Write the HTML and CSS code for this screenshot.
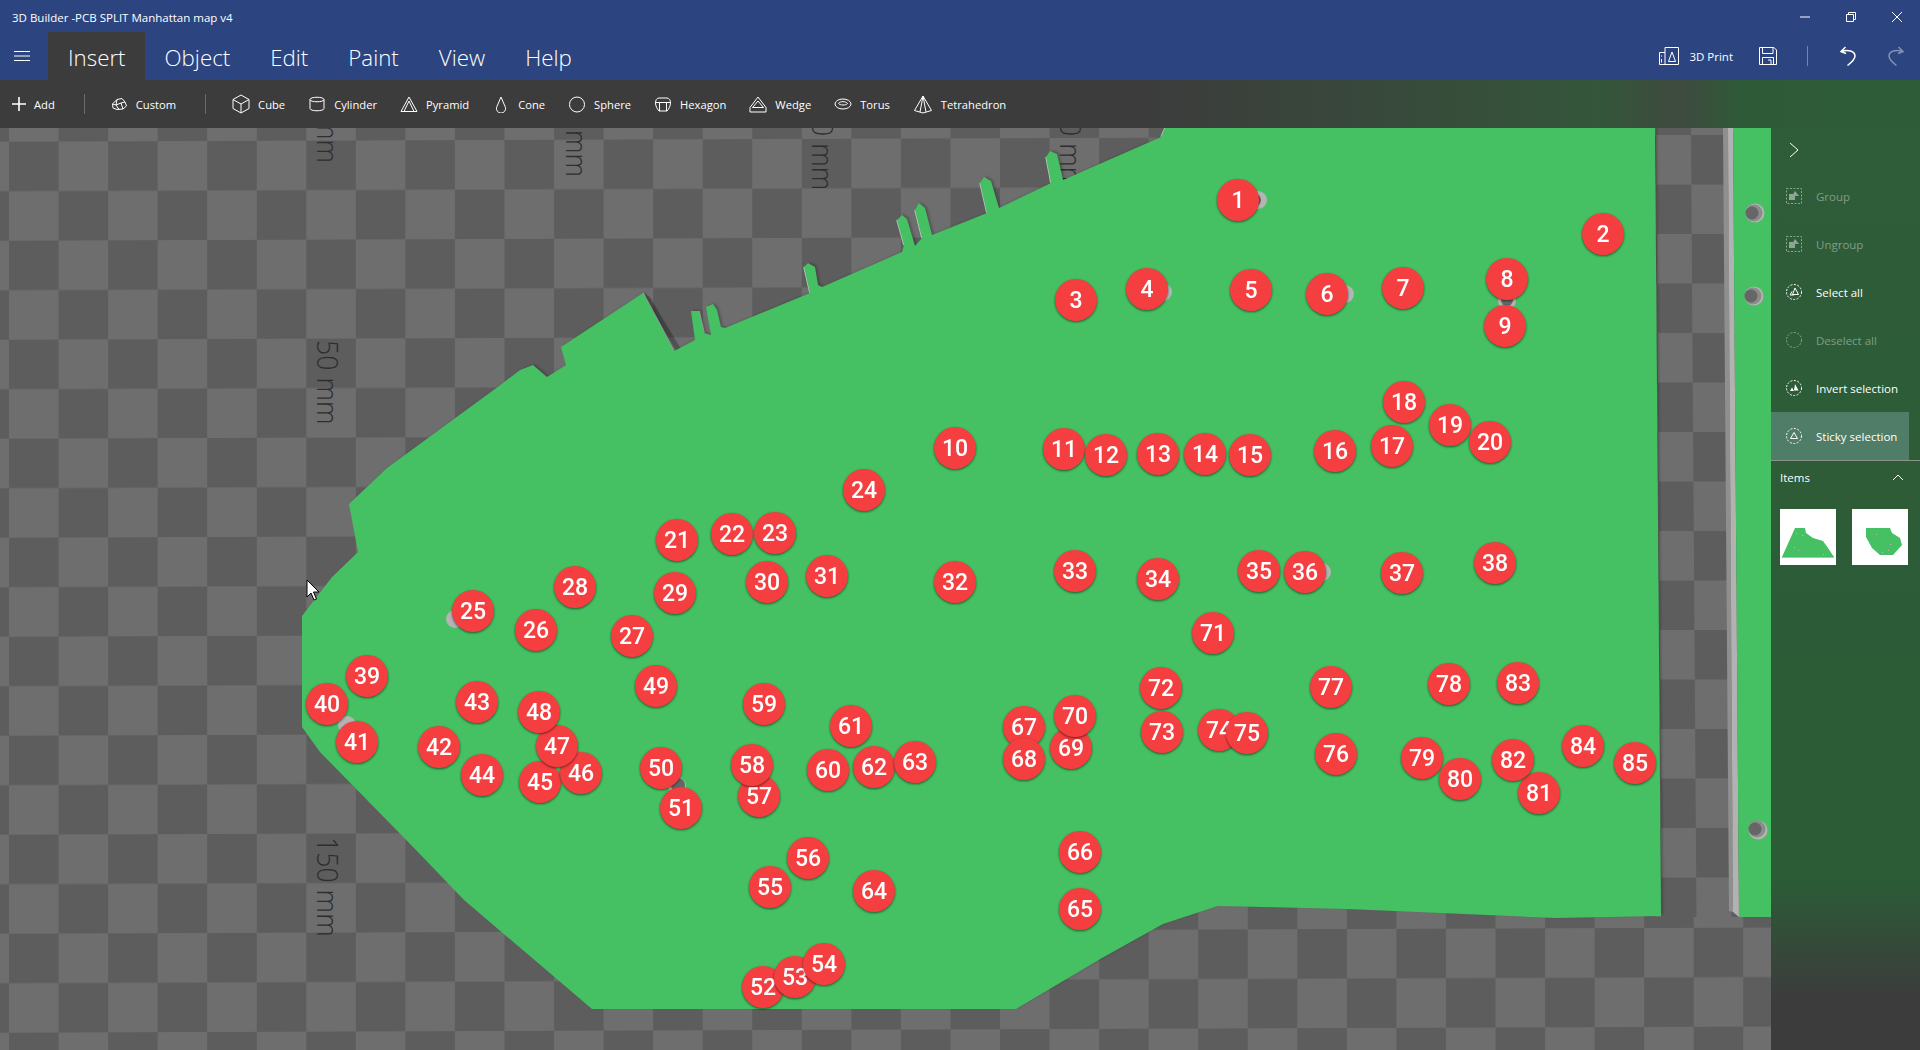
FILE: index.html
```html
<!DOCTYPE html>
<html lang="en">
<head>
    <meta charset="UTF-8">
    <title>3D Builder - PCB SPLIT Manhattan map v4</title>
    <link rel="stylesheet" href="styles.css">
</head>
<body>
<div class="app">
    <header class="titlebar">
        <span class="title">3D Builder -PCB SPLIT Manhattan map v4</span>
        <div class="window-btns">
            <svg width="12" height="12" viewBox="0 0 12 12"><path d="M1 6H11"/></svg>
            <svg width="12" height="12" viewBox="0 0 12 12"><path d="M1.5 3.5H8.5V10.5H1.5Z M3.5 3.5V1.5H10.5V8.5H8.5"/></svg>
            <svg width="12" height="12" viewBox="0 0 12 12"><path d="M1 1L11 11M11 1L1 11"/></svg>
        </div>
    </header>

    <nav class="menubar">
        <button class="hamburger"><svg width="16" height="10" viewBox="0 0 16 10"><path d="M0 .5H16M0 5H16M0 9.5H16"/></svg></button>
        <a class="tab active">Insert</a>
        <a class="tab">Object</a>
        <a class="tab">Edit</a>
        <a class="tab">Paint</a>
        <a class="tab">View</a>
        <a class="tab">Help</a>
        <div class="actions">
            <svg class="print-icon" width="20" height="18" viewBox="0 0 20 18"><path d="M.5 5.5H6M.5 5.5V17.5H19.5V.5H6V17.5M2.5 8.5V9.5M2.5 12V15.5M13 5L16.5 14.5H9.5Z"/></svg>
            <span class="print-label">3D Print</span>
            <svg class="save-icon" width="18" height="18" viewBox="0 0 18 18"><path d="M.5 .5H15L17.5 3V17.5H.5Z M3.5 .5V6.5H14V.5 M3.5 17.5V10.5H14.5V17.5 M9 13H12V17.5"/></svg>
            <span class="action-sep"></span>
            <svg class="undo-icon" width="16" height="20" viewBox="0 0 16 20"><path d="M5.5 1L1 5.5L6 7.5M1 5.5C8 3 15 5 15 10C15 13 12 16 7.5 19.5"/></svg>
            <svg class="redo-icon" width="16" height="20" viewBox="0 0 16 20"><path d="M10.5 1L15 5.5L10 7.5M15 5.5C8 3 1 5 1 10C1 13 4 16 8.5 19.5"/></svg>
        </div>
    </nav>

    <div class="toolbar">
        <div class="tool tool-add"><svg width="14" height="14" viewBox="0 0 14 14"><path d="M7 0V14M0 7H14" stroke-width="1.6"/></svg><span>Add</span></div>
        <span class="tool-sep"></span>
        <div class="tool"><svg width="17" height="14" viewBox="0 0 17 14"><path d="M6 2.5L11 1.5L14 5L15.5 9L12 12L6 12.5L2 11L1.5 7Z M6 2.5L5 8L1.5 7M5 8L8 12.5M5 8L10 6L14 5M10 6L12 12"/></svg><span>Custom</span></div>
        <span class="tool-sep"></span>
        <div class="tool"><svg width="18" height="20" viewBox="0 0 18 20"><path d="M9 1L17 5.5V14.5L9 19L1 14.5V5.5Z M1 5.5L9 10L17 5.5M9 10V19"/></svg><span>Cube</span></div>
        <div class="tool"><svg width="18" height="16" viewBox="0 0 18 16"><path d="M2 3.5C2 .5 16 .5 16 3.5V12.5C16 15.5 2 15.5 2 12.5Z M2 3.5C2 6.5 16 6.5 16 3.5"/></svg><span>Cylinder</span></div>
        <div class="tool"><svg width="18" height="17" viewBox="0 0 18 17"><path d="M9 1L17 15.5H1Z M9 5L4 15.5M9 5L14 15.5"/></svg><span>Pyramid</span></div>
        <div class="tool"><svg width="18" height="17" viewBox="0 0 18 17"><path d="M9 1L13.5 11.5A4.6 4.6 0 1 1 4.5 11.5Z"/></svg><span>Cone</span></div>
        <div class="tool"><svg width="18" height="17" viewBox="0 0 18 17"><circle cx="9" cy="8.5" r="7.5"/></svg><span>Sphere</span></div>
        <div class="tool"><svg width="18" height="15" viewBox="0 0 18 15"><path d="M5 1H13C15.5 1 16.5 3.5 16.5 6S15 12 13 14H5C3 12 1.5 8.5 1.5 6S2.5 1 5 1Z M1.5 5.5H16.5M5.500 5.5V14M12.5 5.5V14"/></svg><span>Hexagon</span></div>
        <div class="tool"><svg width="18" height="17" viewBox="0 0 18 17"><path d="M9 1L17 11.5V16H1V11.5Z M9 5L3.5 11.5H14.5Z"/></svg><span>Wedge</span></div>
        <div class="tool"><svg width="18" height="12" viewBox="0 0 18 12"><ellipse cx="9" cy="6" rx="8" ry="5"/><path d="M4.5 5.5C6 3 12 3 13.5 5.5C12 7.5 6 7.5 4.5 5.5Z"/></svg><span>Torus</span></div>
        <div class="tool"><svg width="20" height="19" viewBox="0 0 20 19"><path d="M10 1L18.5 15.5L10 18L1.5 15.5Z M10 1L7 17M10 1L13 17"/></svg><span>Tetrahedron</span></div>
    </div>

    <div class="main">
        <svg class="viewport" width="1771" height="922" viewBox="0 128 1771 922">
            <defs>
                <pattern id="floor" width="99.1" height="99" patternUnits="userSpaceOnUse" patternTransform="translate(9 141.7) skewY(-0.2)">
                    <rect width="99.1" height="99" fill="#6e6e6e"/>
                    <rect width="49.55" height="49.5" fill="#5d5d5d"/>
                    <rect x="49.55" y="49.5" width="49.55" height="49.5" fill="#5d5d5d"/>
                </pattern>
                <pattern id="gap" width="70" height="99" patternUnits="userSpaceOnUse" patternTransform="translate(1656 135) skewX(0.4)">
                    <rect width="70" height="99" fill="#5d5d5d"/>
                    <rect width="35" height="49.5" fill="#6e6e6e"/>
                    <rect x="35" y="49.5" width="35" height="49.5" fill="#6e6e6e"/>
                </pattern>
            </defs>

            <rect y="128" width="1771" height="922" fill="url(#floor)"/>

            <!-- ruler labels printed on the floor -->
            <text class="ruler" transform="translate(317 116) rotate(90) scale(1 1.12)">mm</text>
            <text class="ruler" transform="translate(317 340) rotate(90) scale(1 1.12)">50 mm</text>
            <text class="ruler" transform="translate(317 837) rotate(90) scale(1 1.12)">150 mm</text>
            <text class="ruler" transform="translate(566 130) rotate(90) scale(1 1.12)">mm</text>
            <text class="ruler" transform="translate(812 121) rotate(90) scale(1 1.12)">0 mm</text>
            <text class="ruler" transform="translate(1060 121) rotate(90) scale(1 1.12)">0 mm</text>

            <polygon points="1650,128 1730,128 1738,917 1655,917" fill="url(#gap)"/>

            <polygon class="tooth-shadow" points="643,293 677,351 681,349 650,297"/>
            <polyline class="tooth-edge" points="643,293 674,351"/>
            <polyline class="tooth-edge" points="699,311 704,333"/>
            <polyline class="tooth-edge" points="804,267 810,293"/>
            <polyline class="tooth-edge" points="897,220 904,245"/>
            <polyline class="tooth-edge" points="915,210 922,238"/>
            <polyline class="tooth-edge" points="980,183 987,213"/>
            <polyline class="tooth-edge" points="1046,157 1051,183"/>
            <polyline class="tooth-edge" points="1161,137 1165,128"/>

            <polygon class="land land-main" points="302,616 332,577 358,552 349,504 387,468 499,386 520,370 533,365 547,377 566,365 561,347 643,293 674,351 695,340 691,311 699,311 704,333 711,335 706,307 713,304 717,310 721,327 725,328 810,293 804,267 808,263 815,267 818,285 822,287 902,252 904,245 897,220 902,215 907,219 915,246 922,238 915,210 919,203 925,208 932,235 987,213 980,183 984,177 991,181 999,208 1051,183 1046,157 1050,151 1057,154 1063,180 1161,137 1165,128 1655,128 1661,916 1555,918 1347,909 1218,906 1163,924 1102,958 1016,1009 592,1009 464,900 416,850 320,752 302,727"/>

            <polygon class="wall-dark" points="1723,128 1728,128 1733,912 1729,911"/>
            <polygon class="wall-light" points="1728,128 1733,128 1739,917 1733,912"/>
            <polygon class="land" points="1733,128 1771,128 1771,917 1739,917"/>

            <!-- drill holes -->
            <g class="hole"><circle cx="1755" cy="213" r="9.5"/><circle class="hole-mid" cx="1754" cy="213" r="8.5"/><circle class="hole-in" cx="1752" cy="213" r="6.5"/></g>
            <g class="hole"><circle cx="1754" cy="296" r="9.5"/><circle class="hole-mid" cx="1753" cy="296" r="8.5"/><circle class="hole-in" cx="1751" cy="296" r="6.5"/></g>
            <g class="hole"><circle cx="1758" cy="830" r="9.5"/><circle class="hole-mid" cx="1757" cy="829" r="8.5"/><circle class="hole-in" cx="1755" cy="829" r="6.5"/></g>
            <g class="hole"><circle cx="1258" cy="200" r="9"/><circle class="hole-in" cx="1255" cy="200" r="6"/></g>
            <g class="hole"><circle cx="1163" cy="292" r="9"/></g>
            <g class="hole"><circle cx="1345" cy="294" r="9"/></g>
            <g class="hole"><circle cx="1507" cy="301" r="9"/><circle class="hole-in" cx="1507" cy="300" r="6"/></g>
            <g class="hole"><circle cx="455" cy="619" r="9"/></g>
            <g class="hole"><circle cx="1322" cy="572" r="9"/></g>
            <g class="hole"><circle cx="677" cy="786" r="9"/><circle class="hole-in" cx="678" cy="785" r="7"/></g>
            <g class="hole"><circle cx="347" cy="725" r="9"/></g>

            <!-- pins -->
            <g class="pin"><circle cx="1238" cy="200" r="21"/><text x="1238" y="208">1</text></g>
            <g class="pin"><circle cx="1603" cy="234" r="21"/><text x="1603" y="242">2</text></g>
            <g class="pin"><circle cx="1076" cy="300" r="21"/><text x="1076" y="308">3</text></g>
            <g class="pin"><circle cx="1147" cy="289" r="21"/><text x="1147" y="297">4</text></g>
            <g class="pin"><circle cx="1251" cy="290" r="21"/><text x="1251" y="298">5</text></g>
            <g class="pin"><circle cx="1327" cy="294" r="21"/><text x="1327" y="302">6</text></g>
            <g class="pin"><circle cx="1403" cy="288" r="21"/><text x="1403" y="296">7</text></g>
            <g class="pin"><circle cx="1507" cy="279" r="21"/><text x="1507" y="287">8</text></g>
            <g class="pin"><circle cx="1505" cy="326" r="21"/><text x="1505" y="334">9</text></g>
            <g class="pin"><circle cx="955" cy="448" r="21"/><text x="955" y="456">10</text></g>
            <g class="pin"><circle cx="1064" cy="449" r="21"/><text x="1064" y="457">11</text></g>
            <g class="pin"><circle cx="1106" cy="455" r="21"/><text x="1106" y="463">12</text></g>
            <g class="pin"><circle cx="1158" cy="454" r="21"/><text x="1158" y="462">13</text></g>
            <g class="pin"><circle cx="1205" cy="454" r="21"/><text x="1205" y="462">14</text></g>
            <g class="pin"><circle cx="1250" cy="455" r="21"/><text x="1250" y="463">15</text></g>
            <g class="pin"><circle cx="1335" cy="451" r="21"/><text x="1335" y="459">16</text></g>
            <g class="pin"><circle cx="1392" cy="446" r="21"/><text x="1392" y="454">17</text></g>
            <g class="pin"><circle cx="1404" cy="402" r="21"/><text x="1404" y="410">18</text></g>
            <g class="pin"><circle cx="1450" cy="425" r="21"/><text x="1450" y="433">19</text></g>
            <g class="pin"><circle cx="1490" cy="442" r="21"/><text x="1490" y="450">20</text></g>
            <g class="pin"><circle cx="677" cy="540" r="21"/><text x="677" y="548">21</text></g>
            <g class="pin"><circle cx="732" cy="534" r="21"/><text x="732" y="542">22</text></g>
            <g class="pin"><circle cx="775" cy="533" r="21"/><text x="775" y="541">23</text></g>
            <g class="pin"><circle cx="864" cy="490" r="21"/><text x="864" y="498">24</text></g>
            <g class="pin"><circle cx="473" cy="611" r="21"/><text x="473" y="619">25</text></g>
            <g class="pin"><circle cx="536" cy="630" r="21"/><text x="536" y="638">26</text></g>
            <g class="pin"><circle cx="632" cy="636" r="21"/><text x="632" y="644">27</text></g>
            <g class="pin"><circle cx="575" cy="587" r="21"/><text x="575" y="595">28</text></g>
            <g class="pin"><circle cx="675" cy="593" r="21"/><text x="675" y="601">29</text></g>
            <g class="pin"><circle cx="767" cy="582" r="21"/><text x="767" y="590">30</text></g>
            <g class="pin"><circle cx="827" cy="576" r="21"/><text x="827" y="584">31</text></g>
            <g class="pin"><circle cx="955" cy="582" r="21"/><text x="955" y="590">32</text></g>
            <g class="pin"><circle cx="1075" cy="571" r="21"/><text x="1075" y="579">33</text></g>
            <g class="pin"><circle cx="1158" cy="579" r="21"/><text x="1158" y="587">34</text></g>
            <g class="pin"><circle cx="1259" cy="571" r="21"/><text x="1259" y="579">35</text></g>
            <g class="pin"><circle cx="1305" cy="572" r="21"/><text x="1305" y="580">36</text></g>
            <g class="pin"><circle cx="1402" cy="573" r="21"/><text x="1402" y="581">37</text></g>
            <g class="pin"><circle cx="1495" cy="563" r="21"/><text x="1495" y="571">38</text></g>
            <g class="pin"><circle cx="367" cy="676" r="21"/><text x="367" y="684">39</text></g>
            <g class="pin"><circle cx="327" cy="704" r="21"/><text x="327" y="712">40</text></g>
            <g class="pin"><circle cx="357" cy="742" r="21"/><text x="357" y="750">41</text></g>
            <g class="pin"><circle cx="439" cy="747" r="21"/><text x="439" y="755">42</text></g>
            <g class="pin"><circle cx="477" cy="702" r="21"/><text x="477" y="710">43</text></g>
            <g class="pin"><circle cx="482" cy="775" r="21"/><text x="482" y="783">44</text></g>
            <g class="pin"><circle cx="540" cy="782" r="21"/><text x="540" y="790">45</text></g>
            <g class="pin"><circle cx="581" cy="773" r="21"/><text x="581" y="781">46</text></g>
            <g class="pin"><circle cx="557" cy="746" r="21"/><text x="557" y="754">47</text></g>
            <g class="pin"><circle cx="539" cy="712" r="21"/><text x="539" y="720">48</text></g>
            <g class="pin"><circle cx="656" cy="686" r="21"/><text x="656" y="694">49</text></g>
            <g class="pin"><circle cx="661" cy="768" r="21"/><text x="661" y="776">50</text></g>
            <g class="pin"><circle cx="681" cy="808" r="21"/><text x="681" y="816">51</text></g>
            <g class="pin"><circle cx="763" cy="987" r="21"/><text x="763" y="995">52</text></g>
            <g class="pin"><circle cx="795" cy="977" r="21"/><text x="795" y="985">53</text></g>
            <g class="pin"><circle cx="824" cy="964" r="21"/><text x="824" y="972">54</text></g>
            <g class="pin"><circle cx="770" cy="887" r="21"/><text x="770" y="895">55</text></g>
            <g class="pin"><circle cx="808" cy="858" r="21"/><text x="808" y="866">56</text></g>
            <g class="pin"><circle cx="759" cy="796" r="21"/><text x="759" y="804">57</text></g>
            <g class="pin"><circle cx="752" cy="765" r="21"/><text x="752" y="773">58</text></g>
            <g class="pin"><circle cx="764" cy="704" r="21"/><text x="764" y="712">59</text></g>
            <g class="pin"><circle cx="828" cy="770" r="21"/><text x="828" y="778">60</text></g>
            <g class="pin"><circle cx="851" cy="726" r="21"/><text x="851" y="734">61</text></g>
            <g class="pin"><circle cx="874" cy="767" r="21"/><text x="874" y="775">62</text></g>
            <g class="pin"><circle cx="915" cy="762" r="21"/><text x="915" y="770">63</text></g>
            <g class="pin"><circle cx="874" cy="891" r="21"/><text x="874" y="899">64</text></g>
            <g class="pin"><circle cx="1080" cy="909" r="21"/><text x="1080" y="917">65</text></g>
            <g class="pin"><circle cx="1080" cy="852" r="21"/><text x="1080" y="860">66</text></g>
            <g class="pin"><circle cx="1024" cy="727" r="21"/><text x="1024" y="735">67</text></g>
            <g class="pin"><circle cx="1024" cy="759" r="21"/><text x="1024" y="767">68</text></g>
            <g class="pin"><circle cx="1071" cy="748" r="21"/><text x="1071" y="756">69</text></g>
            <g class="pin"><circle cx="1075" cy="716" r="21"/><text x="1075" y="724">70</text></g>
            <g class="pin"><circle cx="1213" cy="633" r="21"/><text x="1213" y="641">71</text></g>
            <g class="pin"><circle cx="1161" cy="688" r="21"/><text x="1161" y="696">72</text></g>
            <g class="pin"><circle cx="1162" cy="732" r="21"/><text x="1162" y="740">73</text></g>
            <g class="pin"><circle cx="1219" cy="730" r="21"/><text x="1219" y="738">74</text></g>
            <g class="pin"><circle cx="1247" cy="733" r="21"/><text x="1247" y="741">75</text></g>
            <g class="pin"><circle cx="1336" cy="754" r="21"/><text x="1336" y="762">76</text></g>
            <g class="pin"><circle cx="1331" cy="687" r="21"/><text x="1331" y="695">77</text></g>
            <g class="pin"><circle cx="1449" cy="684" r="21"/><text x="1449" y="692">78</text></g>
            <g class="pin"><circle cx="1422" cy="758" r="21"/><text x="1422" y="766">79</text></g>
            <g class="pin"><circle cx="1460" cy="779" r="21"/><text x="1460" y="787">80</text></g>
            <g class="pin"><circle cx="1539" cy="793" r="21"/><text x="1539" y="801">81</text></g>
            <g class="pin"><circle cx="1513" cy="760" r="21"/><text x="1513" y="768">82</text></g>
            <g class="pin"><circle cx="1518" cy="683" r="21"/><text x="1518" y="691">83</text></g>
            <g class="pin"><circle cx="1583" cy="746" r="21"/><text x="1583" y="754">84</text></g>
            <g class="pin"><circle cx="1635" cy="763" r="21"/><text x="1635" y="771">85</text></g>

            <path class="cursor" d="M307 580V597L311 593L314 600L316.5 599L313.5 592L319 592Z"/>
        </svg>

        <aside class="panel">
            <div class="panel-top"><svg width="10" height="16" viewBox="0 0 10 16"><path d="M1 1L9 8L1 15"/></svg></div>
            <div class="panel-row dim">
                <svg width="16" height="16" viewBox="0 0 16 16"><rect class="dash" x=".5" y=".5" width="15" height="15"/><rect class="solid" x="3" y="6" width="6" height="6"/><path class="solid" d="M9 3L13 8H6Z"/></svg>
                <span>Group</span>
            </div>
            <div class="panel-row dim">
                <svg width="16" height="16" viewBox="0 0 16 16"><rect class="dash" x=".5" y=".5" width="15" height="15"/><rect class="solid" x="3" y="6" width="6" height="6"/><path class="solid" d="M9 3L13 8H6Z"/></svg>
                <span>Ungroup</span>
            </div>
            <div class="panel-row">
                <svg width="16" height="16" viewBox="0 0 16 16"><circle class="dash" cx="8" cy="8" r="7.5"/><path d="M9 4L12.5 10.5H6.5Z M6 7.5L4 11H8"/></svg>
                <span>Select all</span>
            </div>
            <div class="panel-row dim">
                <svg width="16" height="16" viewBox="0 0 16 16"><circle class="dash" cx="8" cy="8" r="7.5"/></svg>
                <span>Deselect all</span>
            </div>
            <div class="panel-row">
                <svg width="16" height="16" viewBox="0 0 16 16"><circle class="dash" cx="8" cy="8" r="7.5"/><path class="solid" d="M9 4L12.5 10.5H8Z M6 7.5L4 11H8Z"/></svg>
                <span>Invert selection</span>
            </div>
            <div class="panel-row selected">
                <svg width="16" height="16" viewBox="0 0 16 16"><circle class="dash" cx="8" cy="8" r="7.5"/><path d="M8 4.5L11.5 10.5H4.5Z"/></svg>
                <span>Sticky selection</span>
            </div>
            <div class="items-head">
                <span>Items</span>
                <svg width="12" height="7" viewBox="0 0 12 7"><path d="M1 6L6 1L11 6"/></svg>
            </div>
            <div class="items">
                <svg class="thumb" width="56" height="56" viewBox="0 0 56 56">
                    <polygon class="thumb-land" points="15,19 25,19 26,24 33,29 43,32 48,39 54,48 2,48"/>
                    <rect class="thumb-base" x="2" y="48" width="52" height="1"/>
                    <rect class="thumb-base" x="16" y="24" width="1" height="1"/>
                    <rect class="thumb-base" x="22" y="26" width="1" height="1"/>
                    <rect class="thumb-base" x="14" y="38" width="1" height="1"/>
                    <rect class="thumb-base" x="18" y="41" width="1" height="1"/>
                    <rect class="thumb-base" x="43" y="45" width="1" height="1"/>
                </svg>
                <svg class="thumb" width="56" height="56" viewBox="0 0 56 56">
                    <polygon class="thumb-land" points="14,19 38,19 40,24 48,29 50,36 41,46 28,46 20,39 14,28"/>
                    <rect class="thumb-base" x="24" y="25" width="1" height="1"/>
                    <rect class="thumb-base" x="38" y="35" width="1" height="1"/>
                    <rect class="thumb-base" x="36" y="41" width="1" height="1"/>
                    <rect class="thumb-base" x="30" y="43" width="1" height="1"/>
                </svg>
            </div>
        </aside>
    </div>
</div>
</body>
</html>
```

FILE: styles.css
```css
* {
    box-sizing: border-box;
}
html, body {
    margin: 0;
    height: 100%;
    overflow: hidden;
}
body {
    font-family: 'Open Sans', 'Liberation Sans', sans-serif;
    font-size: 11.5px;
    color: #fff;
    background-color: #3c3c3c;
}
.app {
    display: flex;
    flex-direction: column;
    height: 1050px;
}
svg {
    display: block;
    flex: none;
}
.titlebar svg *, .menubar svg *, .toolbar svg *, .panel svg * {
    fill: none;
    stroke: #fff;
}

.titlebar {
    display: flex;
    justify-content: space-between;
    align-items: center;
    height: 32px;
    padding: 2px 17px 0 12px;
    background-color: #2c4580;
}
.window-btns {
    display: flex;
    gap: 34px;
}

.menubar {
    display: flex;
    align-items: stretch;
    height: 48px;
    background-color: #2c4580;
}
.hamburger {
    display: flex;
    align-items: center;
    width: 48px;
    padding: 0 0 0 14px;
    background: none;
    border: none;
}
.tab {
    display: flex;
    align-items: center;
    padding: 2px 20px 0;
    font-size: 22.3px;
    font-weight: 300;
}
.tab.active {
    padding-right: 19px;
    background-color: #3c3c3c;
}
.actions {
    display: flex;
    align-items: center;
    margin-left: auto;
    padding-right: 16px;
}
.print-label {
    margin-left: 10px;
}
.save-icon {
    margin-left: 26px;
}
.action-sep {
    width: 1px;
    height: 20px;
    margin-left: 30px;
    background-color: #7486b0;
}
.undo-icon {
    margin-left: 32px;
}
.menubar .undo-icon path, .menubar .redo-icon path {
    stroke-width: 1.5;
}
.redo-icon {
    margin-left: 32px;
    opacity: .4;
}

.toolbar {
    display: flex;
    align-items: center;
    gap: 23px;
    height: 48px;
    padding-left: 12px;
    font-size: 11.2px;
    background: linear-gradient(to right, #3c3c3c 0, #3c3c3c 1150px, #34563a 1600px, #3f4a3f 1680px, #2f5a38 1740px, #2e5c38 1920px);
}
.tool {
    display: flex;
    align-items: center;
    gap: 8px;
}
.tool-sep {
    width: 1px;
    height: 20px;
    margin: 0 3px 0 6px;
    background-color: #6a6a6a;
}

.main {
    display: flex;
    flex: 1;
    min-height: 0;
}
.ruler {
    font-family: 'Open Sans', sans-serif;
    font-size: 26.7px;
    font-weight: 300;
    fill: #2e2e2e;
}
.land {
    fill: #45c062;
}
.land-main {
    filter: drop-shadow(2px -1px 1px rgba(0, 0, 0, .22));
}
.tooth-shadow {
    fill: rgba(0, 0, 0, .25);
}
.tooth-edge {
    fill: none;
    stroke: #c4c4c4;
    stroke-width: 1.5;
}
.wall-dark {
    fill: #8f8f8f;
}
.wall-light {
    fill: #b2b2b2;
}
.hole circle {
    fill: #b4b4b4;
}
.hole .hole-mid {
    fill: #8c8c8c;
}
.hole .hole-in {
    fill: #666;
}
.pin {
    filter: drop-shadow(0 1px 1px rgba(0, 0, 0, .55));
}
.pin circle {
    fill: #f43e40;
}
.pin text {
    font-family: Roboto, sans-serif;
    font-size: 23px;
    font-weight: 500;
    fill: #fff;
    text-anchor: middle;
}
.cursor {
    fill: #fff;
    stroke: #000;
}

.panel {
    flex: none;
    width: 149px;
    background: linear-gradient(to bottom, #2f5c39 0, #2b5c36 750px, #3c3c3c 870px);
}
.panel-top {
    height: 44px;
    padding: 14px 0 0 18px;
}
.panel-row {
    display: flex;
    align-items: center;
    gap: 14px;
    width: 138px;
    height: 48px;
    padding-left: 15px;
}
.panel-row .dash {
    stroke-dasharray: 2 1.5;
}
.panel-row .solid {
    fill: #fff;
    stroke: none;
}
.panel-row.dim {
    color: #7f9d87;
}
.panel-row.dim svg {
    opacity: .45;
}
.panel-row.selected {
    background-color: #4f7d67;
}
.items-head {
    display: flex;
    justify-content: space-between;
    align-items: center;
    height: 36px;
    padding: 0 16px 2px 9px;
    border-top: 1px solid #8b918c;
}
.items {
    display: flex;
    gap: 16px;
    padding: 13px 0 0 9px;
}
.thumb {
    background-color: #fff;
}
.thumb .thumb-land {
    fill: #45c062;
    stroke: none;
}
.thumb .thumb-base {
    fill: #bbb;
    stroke: none;
}
```
